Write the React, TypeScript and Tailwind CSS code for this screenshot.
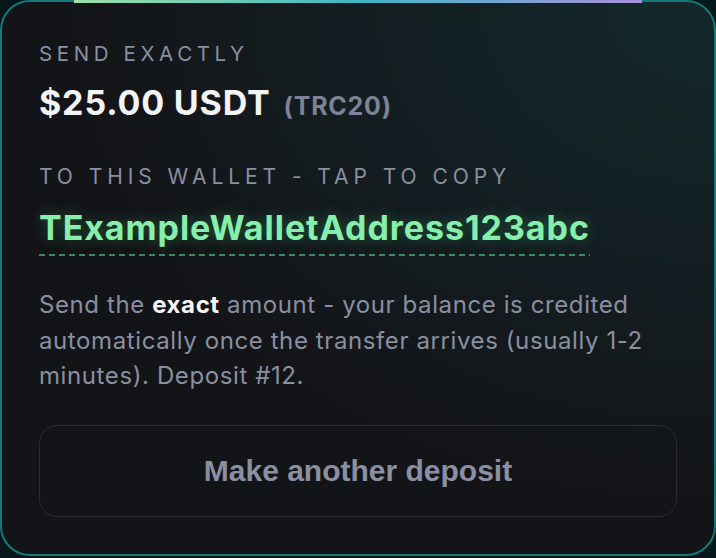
import React from "react";

export default function App() {
  return (
    <div className="w-[716px] h-[558px] bg-[#06171a] font-['Inter',sans-serif]">
      <div className="relative h-[556px] rounded-[30px] border-2 border-[#15787a] bg-[#131418] bg-[radial-gradient(ellipse_at_top_right,rgba(20,150,150,0.16),transparent_65%)] px-[37px] pt-[40px] pb-[37px] flex flex-col">
        <div className="absolute -top-[2px] left-[72px] w-[568px] h-[3px] bg-[linear-gradient(90deg,#9fe0a8,#3fb7c4_50%,#a98fdc)]" />
        <div className="text-[20.5px] leading-[24px] tracking-[0.225em] text-[#8a8fa0] uppercase">Send exactly</div>
        <div className="mt-[17px] leading-[40px] flex items-baseline gap-[13px]">
          <span className="text-[34px] font-bold tracking-[0.025em] text-[#f4f4f6]">$25.00 USDT</span>
          <span className="text-[25px] font-bold tracking-[0.03em] text-[#7d8294]">(TRC20)</span>
        </div>
        <div className="mt-[39px] text-[21px] leading-[24px] tracking-[0.235em] text-[#8a8fa0] uppercase">To this wallet - tap to copy</div>
        <div className="mt-[19px] self-start">
          <div className="text-[34px] leading-[40px] font-bold tracking-[0.028em] text-[#86efac] [text-shadow:0_0_14px_rgba(74,222,128,0.35)]">TExampleWalletAddress123abc</div>
          <div className="mt-[6px] h-[2px] bg-[repeating-linear-gradient(90deg,#3c8a62_0_6px,transparent_6px_10px)]" />
        </div>
        <p className="mt-[31px] text-[24px] leading-[35.5px] tracking-[0.025em] text-[#8a8fa0]">
          Send the <b className="font-bold text-[#f6f6f8]">exact</b> amount - your balance is credited automatically once the transfer arrives (usually 1-2 minutes). Deposit #12.
        </p>
        <button className="mt-[31px] h-[93px] w-full rounded-[18px] border border-[#2b2c31] bg-transparent font-['Liberation_Sans',Arial,sans-serif] text-[30px] font-bold text-[#8a8fa2]">
          Make another deposit
        </button>
      </div>
    </div>
  );
}
